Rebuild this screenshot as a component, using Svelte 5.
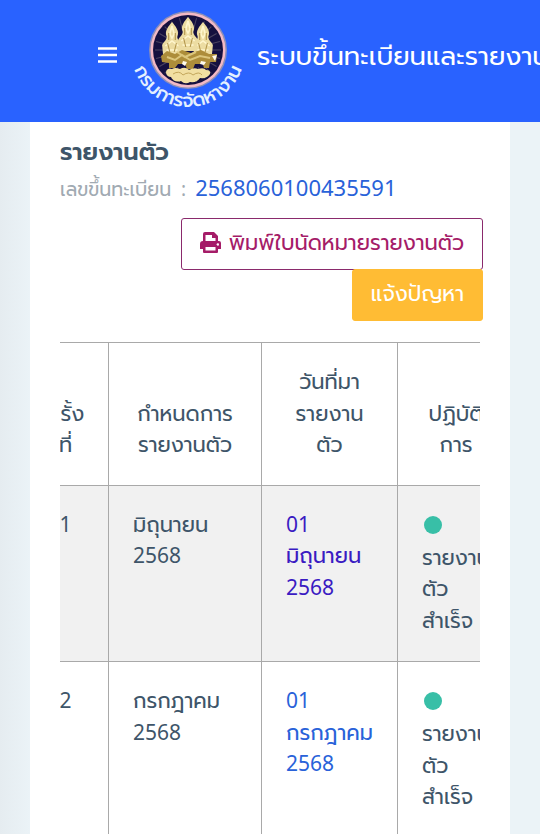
<script lang="ts">
	import { onMount } from 'svelte';

	const rows = [
		{ no: 1, month: 'มิถุนายน', year: '2568', visited: true },
		{ no: 2, month: 'กรกฎาคม', year: '2568', visited: false },
	];

	const rays = Array.from({ length: 24 }, (_, i) => i * 15);
	const figures = [
		{ x: 39, y: 23 },
		{ x: 70, y: 23 },
		{ x: 55, y: 18 },
	];

	let scroller: HTMLDivElement;

	onMount(() => {
		scroller.scrollLeft = 38;
	});
</script>

<div class="app">
	<header class="topbar">
		<button class="menu" aria-label="เมนู">
			<svg width="20" height="16" viewBox="0 0 20 16">
				<path d="M0 1.5h19M0 8h19M0 14.500h19" stroke="#fff" stroke-width="2.400" />
			</svg>
		</button>
		<svg class="logo" width="110" height="114" viewBox="0 -10 110 114">
			<defs>
				<path id="ring" d="M-2 42 A57 57 0 0 0 112 42" />
			</defs>
			<circle cx="55" cy="42" r="39" fill="#8c8fb8" />
			<circle cx="55" cy="42" r="37.500" fill="#f3b9c4" />
			<circle cx="55" cy="42" r="35" fill="#15103f" />
			{#each rays as angle}
				<path d="M55 22V9" stroke="#4b4460" stroke-width="1" transform="rotate({angle} 55 42)" />
			{/each}
			{#each figures as f}
				<g transform="translate({f.x} {f.y}) scale(1.1 1)">
					<path
						d="M0-9C3-5 7 0 5 5C4 8 7 10 9 14L8 25H-8L-9 14C-7 10-4 8-5 5C-7 0-3-5 0-9Z"
						fill="#ecdca2"
					/>
					<path d="M0-5L2 3L0 7L-2 3ZM-6 15L0 10L6 15M-5 19H5" fill="none" stroke="#fff6cd" stroke-width="1.500" />
					<path d="M-3 2V9M3 2V9M-4 12L-2 21M4 12L2 21" stroke="#b3964c" stroke-width="1" />
				</g>
			{/each}
			<path
				d="M28 48L34 43L42 46L49 42L58 45L68 42L76 46L84 46L83 54L77 54L76 60L71 60L70 56L62 56L60 61L54 61L52 56L45 56L42 60L36 60L36 55L29 54Z"
				fill="#ad8d3a"
			/>
			<path d="M34 49L42 52L49 47L57 52L67 48L77 50M44 44L52 49L63 44" fill="none" stroke="#dcc67c" stroke-width="2" />
			<path d="M50 53l4 1-2 4-3-2zM68 53l5 1-2 3-4-1zM79 48l5-1-2 6z" fill="#fffbed" />
			<path
				d="M33 65q0-5 6-4q3-2 8 0q5-3 9 1q5-3 9-1q6-2 8 1q5 0 4 4q-3 5-10 4q-3 5-10 4q-5 3-9-1q-7 2-10-4q-4 0-5-4z"
				fill="#f1dfa2"
			/>
			<path d="M40 66q6-4 10 1q6-4 10 0q6-4 9 0" fill="none" stroke="#c3a65b" />
			<text class="ring-text" text-anchor="middle">
				<textPath href="#ring" startOffset="50%">กรมการจัดหางาน</textPath>
			</text>
		</svg>
		<h1>ระบบขึ้นทะเบียนและรายงานตัว</h1>
	</header>

	<main>
		<section class="card">
			<h2>รายงานตัว</h2>
			<p class="register">เลขขึ้นทะเบียน&nbsp; : <span>2568060100435591</span></p>

			<div class="actions">
				<button class="btn print">
					<svg width="21" height="22" viewBox="0 0 21 22">
						<path
							fill="currentColor"
							fill-rule="evenodd"
							d="M5 0H14L18 4V9H19Q21 9 21 11V17H18V20Q18 21 17 21H4Q3 21 3 20V17H0V12Q0 9 3 9V2Q3 0 5 0ZM5.500 3V9H15.500V6H12V3ZM5.500 15V18.500H15.500V15ZM17 11.500A1.200 1.200 0 1 0 19 12.500A1.200 1.200 0 0 0 17 11.500Z"
						/>
					</svg>
					พิมพ์ใบนัดหมายรายงานตัว
				</button>
				<button class="btn report">แจ้งปัญหา</button>
			</div>

			<div class="table-scroll" bind:this={scroller}>
				<table>
					<colgroup>
						<col class="col-no" />
						<col class="col-schedule" />
						<col class="col-date" />
						<col class="col-status" />
					</colgroup>
					<thead>
						<tr>
							<th>ครั้ง<br />ที่</th>
							<th>กำหนดการ<br />รายงานตัว</th>
							<th>วันที่มา<br />รายงาน<br />ตัว</th>
							<th>ปฏิบัติ<br />การ</th>
						</tr>
					</thead>
					<tbody>
						{#each rows as row}
							<tr>
								<td class="no">{row.no}</td>
								<td>{row.month}<br />{row.year}</td>
								<td>
									<a href="#report-{row.no}" class:visited={row.visited}>01<br />{row.month}<br />{row.year}</a>
								</td>
								<td><span class="dot"></span>รายงาน<br />ตัว<br />สำเร็จ</td>
							</tr>
						{/each}
					</tbody>
				</table>
			</div>
		</section>
	</main>
</div>

<style>
	:global(body) {
		margin: 0;
	}

	.app {
		display: flex;
		flex-direction: column;
		height: 100vh;
		overflow: hidden;
		background: #ebf3f7;
		color: #3e5569;
		font-family: 'Noto Sans', 'Prompt', 'Noto Sans Thai', sans-serif;
		font-size: 21px;
		line-height: 1.5;
	}

	.topbar {
		display: flex;
		align-items: center;
		flex: none;
		box-sizing: border-box;
		height: 122px;
		padding: 0 0 12px 98px;
		background: #2962ff;
		color: #fff;
		overflow: hidden;
	}

	.menu {
		display: flex;
		flex: none;
		margin-right: 15px;
		padding: 0;
		border: 0;
		background: none;
	}

	.logo {
		flex: none;
		margin-right: 14px;
		overflow: visible;
	}

	.ring-text {
		fill: #e4f0ff;
		font-size: 19px;
		font-weight: 500;
	}

	h1 {
		margin: 0;
		font-size: 26px;
		font-weight: 400;
		white-space: nowrap;
	}

	main {
		flex: 1;
		min-height: 0;
		padding: 0 30px;
		background: linear-gradient(to right, #e5ecf0, #ebf3f7 30px);
	}

	.card {
		padding: 11px 30px 30px;
		background: #fff;
	}

	h2 {
		margin: 0;
		font-size: 24px;
		font-weight: 600;
		line-height: 36px;
	}

	.register {
		margin: 0;
		color: #a1aab2;
		font-size: 19px;
		line-height: 36px;
		white-space: nowrap;
	}

	.register span {
		margin-left: 4px;
		color: #2962d9;
		font-size: 22px;
	}

	.actions {
		display: flex;
		flex-direction: column;
		align-items: flex-end;
		margin: 11px -3px 21px 0;
	}

	.btn {
		display: flex;
		align-items: center;
		gap: 8px;
		box-sizing: border-box;
		height: 52px;
		padding: 0 18px 2px;
		border: 1px solid;
		border-radius: 3px;
		font: inherit;
		white-space: nowrap;
	}

	.print {
		background: #fff;
		border-color: #8a2a6c;
		color: #a51c68;
	}

	.report {
		margin-top: -1px;
		border-color: #ffbc34;
		background: #ffbc34;
		color: #fff;
	}

	.table-scroll {
		overflow-x: auto;
		scrollbar-width: none;
	}

	table {
		width: 492px;
		table-layout: fixed;
		border-collapse: collapse;
	}

	.col-no {
		width: 86px;
	}

	.col-schedule {
		width: 153px;
	}

	.col-date {
		width: 136px;
	}

	.col-status {
		width: 117px;
	}

	th,
	td {
		padding: 23px 24px 25px;
		border: 1px solid #a9a9a9;
		text-align: left;
		vertical-align: top;
		white-space: nowrap;
	}

	th {
		padding-bottom: 24px;
		font-weight: 400;
		text-align: center;
		vertical-align: bottom;
	}

	.no {
		text-align: center;
	}

	tbody tr:nth-child(odd) {
		background: #f1f1f1;
	}

	a {
		color: #2962d9;
		text-decoration: none;
	}

	a.visited {
		color: #3a1bc2;
	}

	.dot {
		display: block;
		width: 18px;
		height: 18px;
		margin: 7px 0 8px 2px;
		border-radius: 50%;
		background: #38bfa7;
	}
</style>
